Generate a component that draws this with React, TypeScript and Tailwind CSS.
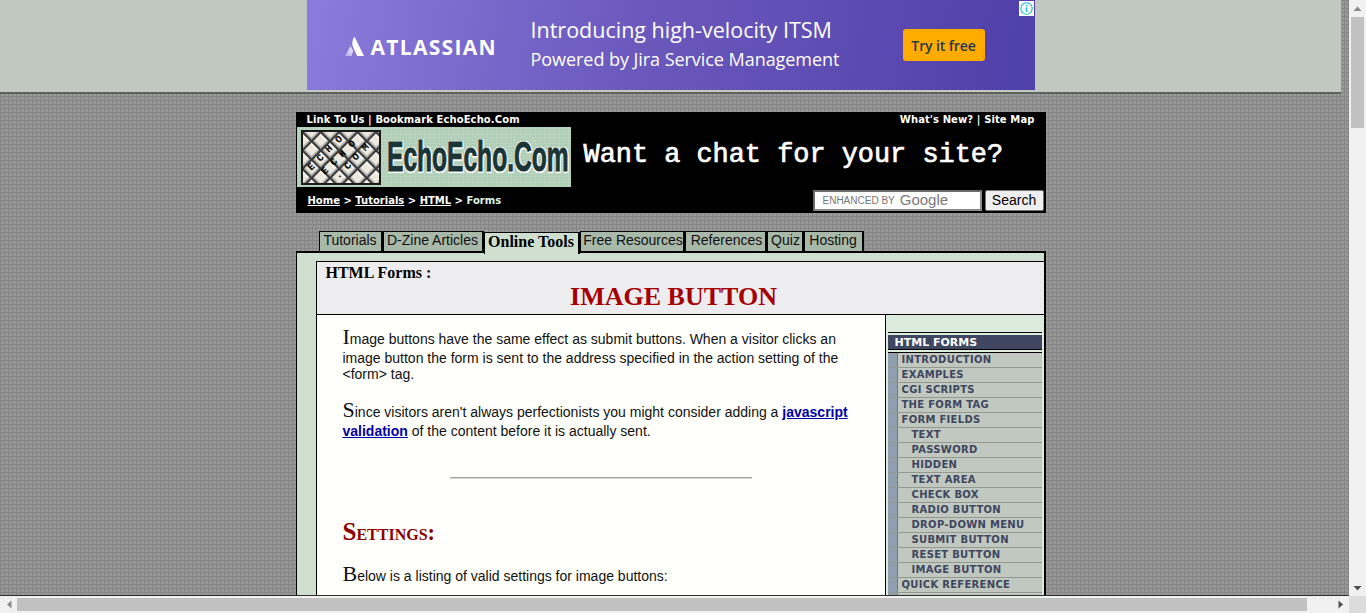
import { Fragment } from "react";

const verdana = "font-['DejaVu_Sans','Liberation_Sans',sans-serif]";

const tabs = [
  { label: "Tutorials", w: "w-[64px]" },
  { label: "D-Zine Articles", w: "w-[101px]" },
  { label: "Online Tools", w: "w-[96px]", active: true },
  { label: "Free Resources", w: "w-[105px] pl-[3px]" },
  { label: "References", w: "w-[82px] pl-[3px]" },
  { label: "Quiz", w: "w-[37px] pl-[2px]" },
  { label: "Hosting", w: "w-[60px]", last: true },
];

const navItems = [
  { label: "INTRODUCTION" },
  { label: "EXAMPLES" },
  { label: "CGI SCRIPTS" },
  { label: "THE FORM TAG" },
  { label: "FORM FIELDS" },
  { label: "TEXT", sub: true },
  { label: "PASSWORD", sub: true },
  { label: "HIDDEN", sub: true },
  { label: "TEXT AREA", sub: true },
  { label: "CHECK BOX", sub: true },
  { label: "RADIO BUTTON", sub: true },
  { label: "DROP-DOWN MENU", sub: true },
  { label: "SUBMIT BUTTON", sub: true },
  { label: "RESET BUTTON", sub: true },
  { label: "IMAGE BUTTON", sub: true },
  { label: "QUICK REFERENCE" },
  { label: "" },
];

function AdBanner() {
  return (
    <div className="w-[728px] h-[90px] mx-auto flex items-center bg-[linear-gradient(100deg,#8a7bdc_0%,#6b59bd_45%,#4f3fa8_100%)] text-white font-['Open_Sans','Liberation_Sans',sans-serif]">
      <div className="w-[224px] pl-[38px] flex items-center gap-[7px] mt-[2px]">
        <svg width="19" height="19" viewBox="0 0 19 19">
          <defs>
            <linearGradient id="atl" x1="1" y1="0" x2="0" y2="1">
              <stop offset="0" stopColor="#ffffff" stopOpacity="0.9" />
              <stop offset="1" stopColor="#ffffff" stopOpacity="0.35" />
            </linearGradient>
          </defs>
          <path d="M5.5 9 L0 19 H6.5 L8.2 14 Z" fill="url(#atl)" />
          <path d="M9 0 C6.8 4 6.8 8 8.6 11.5 L12.2 19 H19 L10 0.6 Z" fill="#ffffff" />
        </svg>
        <span className="mt-[2px] text-[21px] font-bold tracking-[1.3px] leading-none">ATLASSIAN</span>
      </div>
      <div className="w-[372px] flex flex-col gap-[3px] -mt-[3px]">
        <span className="text-[21.5px] leading-[28px] font-medium whitespace-nowrap">Introducing high-velocity ITSM</span>
        <span className="text-[18px] leading-[24px] tracking-[-0.05px] font-medium whitespace-nowrap">Powered by Jira Service Management</span>
      </div>
      <div className="w-[82px] h-[32px] rounded-[3px] bg-[#ffab00] flex items-center justify-center text-[#253858] text-[14px] font-semibold tracking-[-0.1px]">Try it free</div>
      <div className="ml-[34px] mb-[74px] w-[15px] h-[15px] bg-white flex items-center justify-center">
        <svg width="13" height="13" viewBox="0 0 13 13" fill="none">
          <circle cx="6.5" cy="6.5" r="5.7" stroke="#1fb6d8" strokeWidth="1.1" />
          <rect x="5.8" y="5.4" width="1.5" height="4.6" fill="#1fb6d8" />
          <rect x="5.8" y="2.9" width="1.5" height="1.5" fill="#1fb6d8" />
        </svg>
      </div>
    </div>
  );
}

function LogoIcon() {
  const letters = [
    ["E", 10.5, 37], ["C", 19.5, 28], ["H", 28, 19], ["O", 38, 9.5],
    ["E", 24, 41], ["C", 33, 32], ["H", 41.5, 24], ["O", 51, 14],
    [".", 37.5, 45], ["C", 47, 36], ["O", 55, 27], ["M", 64.5, 17.5],
  ] as const;
  return (
    <svg width="80" height="55" viewBox="0 0 80 55" className="shrink-0">
      <defs>
        <pattern id="lattice" width="13" height="13" patternUnits="userSpaceOnUse" patternTransform="rotate(45) translate(3.5 1.5)">
          <rect width="13" height="13" fill="#ece8de" />
          <rect x="0" y="0" width="10" height="2" fill="#fbf8f1" />
          <rect x="0" y="9.5" width="13" height="1.5" fill="#a0a0a0" />
          <rect x="9.5" y="0" width="1.5" height="13" fill="#a0a0a0" />
          <rect x="0" y="11" width="13" height="2" fill="#3a3a3a" />
          <rect x="11" y="0" width="2" height="13" fill="#3a3a3a" />
        </pattern>
      </defs>
      <rect width="80" height="55" fill="#1c1c1c" />
      <rect x="2" y="2" width="76" height="51" fill="url(#lattice)" />
      {letters.map(([ch, x, y], i) => (
        <text key={i} x={x} y={y} transform={`rotate(-45 ${x} ${y})`} textAnchor="middle" dominantBaseline="central" fontFamily="'Liberation Mono', monospace" fontWeight="700" fontSize="10" fill="#000000">
          {ch}
        </text>
      ))}
    </svg>
  );
}

function Header() {
  const link = `text-[10px] font-bold text-white ${verdana}`;
  return (
    <div className="w-[750px] h-[101px] mx-auto bg-black flex flex-col">
      <div className={`h-[15px] pl-[11px] pr-[11px] flex justify-between items-center tracking-[0.1px] ${link}`}>
        <span>Link To Us | Bookmark EchoEcho.Com</span>
        <span>What's New? | Site Map</span>
      </div>
      <div className="h-[60px] pl-px flex items-center">
        <div className="w-[274px] h-[60px] pl-[4px] flex items-center bg-[#b2cfb9] bg-[radial-gradient(#c8dfcc_1px,transparent_1px)] bg-[length:3px_3px]">
          <LogoIcon />
          <span className="block ml-[6px] w-[182px] text-[42px] leading-none font-bold text-[#1a3535] font-['Liberation_Sans',sans-serif] scale-x-[0.585] origin-left whitespace-nowrap [-webkit-text-stroke:1px_#1a3535] [text-shadow:2px_2px_0_#fff,-1px_2px_0_#fff,2px_-1px_0_#fff,-1px_-1px_0_#fff]">EchoEcho.Com</span>
        </div>
        <span className="ml-[13px] mb-[3px] text-[26.9px] leading-none text-white font-['Liberation_Mono',monospace] whitespace-nowrap [-webkit-text-stroke:0.7px_#fff]">Want a chat for your site?</span>
      </div>
      <div className="flex-1 pl-[12px] pr-[2px] flex items-center justify-between">
        <span className={link}>
          <span className="underline">Home</span> &gt; <span className="underline">Tutorials</span> &gt; <span className="underline">HTML</span> &gt; <span className="text-[#dff5e6]">Forms</span>
        </span>
        <div className="flex items-center gap-[3px] mt-px">
          <div className="w-[169px] h-[21px] bg-white border-2 border-[#6a6a6a] border-r-[#8a8a8a] border-b-[#8a8a8a] pl-[8px] flex items-center gap-[5px] font-['Liberation_Sans',sans-serif] text-[#757575]">
            <span className="text-[10px]">ENHANCED BY</span>
            <span className="text-[15px] leading-none font-medium text-[#7a7a7a] mb-[2px]">Google</span>
          </div>
          <div className="w-[59px] h-[21px] rounded-[2px] bg-[#efefef] border border-[#767676] flex items-center justify-center text-[14px] text-black font-['Liberation_Sans',sans-serif]">Search</div>
        </div>
      </div>
    </div>
  );
}

function TabBar() {
  return (
    <div className="w-[750px] h-[20px] mx-auto pl-[23px] flex items-start mt-[18px]">
      {tabs.map((t) => (
        <div
          key={t.label}
          className={`${t.w} flex items-center justify-center border-l border-t border-r-2 border-black whitespace-nowrap ${
            t.active
              ? "relative z-10 mt-px h-[22px] pb-[3px] bg-[#cfdfcf] text-[16px] font-bold font-['Liberation_Serif',serif] text-black"
              : "h-[20px] pb-[2px] bg-[#a9b9a9] text-[14px] text-[#101010] font-['Liberation_Sans',sans-serif]"
          }`}
        >
          {t.label}
        </div>
      ))}
    </div>
  );
}

function SideNav() {
  return (
    <div className="w-[159px] shrink-0 pt-[17px] pl-[2px] bg-[#dcecdc] border-l border-black">
      <div className="w-[154px]">
        <div className="h-px bg-black" />
        <div className={`mt-[2px] h-[15px] pt-[2px] border-b border-black bg-[#3e4660] pl-[7px] flex items-center text-[11px] font-bold text-white ${verdana}`}>HTML FORMS</div>
        <div className="mt-[2px] h-px bg-black" />
        {navItems.map((item, i) => (
          <div key={i} className="h-[15px] flex bg-[#c0c8bf] border-b border-[#949890]">
            <div className="w-[10px] bg-[#8f9fb0] border-r border-[#6f7a84]" />
            <span className={`${item.sub ? "pl-[14px]" : "pl-[4px]"} text-[10px] leading-[13px] font-bold tracking-[0.3px] whitespace-nowrap text-[#3e4660] ${verdana}`}>{item.label}</span>
          </div>
        ))}
      </div>
    </div>
  );
}

function Article() {
  const para = "first-letter:text-[22px] first-letter:font-['Liberation_Serif',serif]";
  return (
    <div className="flex-1 min-w-0 bg-[#fffffb] pl-[26px] pr-[24px] pt-[9px] text-[14px] leading-[normal] text-[#111] font-['Liberation_Sans',sans-serif]">
      <p className={para}>
        Image buttons have the same effect as submit buttons. When a visitor clicks an image button the form is sent to the address specified in the action setting of the &lt;form&gt; tag.
      </p>
      <p className={`mt-[15px] ${para}`}>
        Since visitors aren't always perfectionists you might consider adding a{" "}
        <span className="font-bold underline text-[#0000a8]">javascript validation</span> of the content before it is actually sent.
      </p>
      <div className="mt-[38px] ml-[107px] w-[302px] h-[2px] bg-[#a0a0a0] border-b border-[#d8d8d8]" />
      <h2 className="mt-[39px] text-[22.5px] font-bold text-[#8b0000] font-['Liberation_Serif',serif] [font-variant:small-caps] first-letter:text-[25px]">Settings:</h2>
      <p className={`mt-[15px] ${para}`}>Below is a listing of valid settings for image buttons:</p>
    </div>
  );
}

function Content() {
  return (
    <div className="flex-1 min-h-0 w-[750px] mx-auto border-l border-r-2 border-t-2 border-black bg-[#cfdfcf] pl-[19px] pt-[8px] flex overflow-hidden">
      <div className="flex-1 min-w-0 flex flex-col border-l border-t border-black">
        <div className="h-[53px] shrink-0 bg-[#ededf0] border-b border-black pl-[9px] pt-[2px] text-black font-['Liberation_Serif',serif]">
          <div className="text-[16px] font-bold leading-[18px]">HTML Forms :</div>
          <div className="pr-[22px] text-center text-[26px] font-bold leading-[30px] text-[#a60000]">IMAGE BUTTON</div>
        </div>
        <div className="flex-1 min-h-0 flex">
          <Article />
          <SideNav />
        </div>
      </div>
    </div>
  );
}

function VScrollbar() {
  return (
    <div className="w-[17px] shrink-0 bg-[#f1f1f1] flex flex-col items-center">
      <div className="h-[17px] flex items-center justify-center">
        <svg width="9" height="6" viewBox="0 0 9 6"><path d="M4.5 0.5 L8.5 5 H0.5 Z" fill="#8a8a8a" /></svg>
      </div>
      <div className="w-[13px] h-[111px] bg-[#c1c1c1]" />
      <div className="flex-1" />
      <div className="h-[17px] flex items-center justify-center">
        <svg width="9" height="6" viewBox="0 0 9 6"><path d="M0.5 1 H8.5 L4.5 5.5 Z" fill="#505050" /></svg>
      </div>
    </div>
  );
}

function HScrollbar() {
  return (
    <div className="h-[17px] shrink-0 flex bg-[#f1f1f1]">
      <div className="w-[17px] flex items-center justify-center">
        <svg width="6" height="9" viewBox="0 0 6 9"><path d="M5.5 0.5 V8.5 L1 4.5 Z" fill="#8a8a8a" /></svg>
      </div>
      <div className="mt-[2px] w-[1290px] h-[13px] bg-[#c1c1c1]" />
      <div className="flex-1 flex items-center justify-end pr-[5px]">
        <svg width="6" height="9" viewBox="0 0 6 9"><path d="M0.5 0.5 L5 4.5 L0.5 8.5 Z" fill="#505050" /></svg>
      </div>
      <div className="w-[17px] bg-[#dcdcdc]" />
    </div>
  );
}

export default function App() {
  return (
    <Fragment>
      <div className="w-[1366px] h-[613px] overflow-hidden flex flex-col">
        <div className="flex-1 min-h-0 flex">
          <div className="flex-1 min-w-0 border-b border-[#2e2e2e] bg-[#989898] bg-[linear-gradient(#868686_1px,transparent_1px),linear-gradient(90deg,#868686_1px,transparent_1px)] bg-[length:4px_4px]">
            <div className="w-[1341px] h-full flex flex-col">
              <div className="h-[94px] shrink-0 bg-[#c0c8bf] border-b-2 border-[#5f635f]">
                <AdBanner />
              </div>
              <div className="mt-[18px]">
                <Header />
              </div>
              <TabBar />
              <Content />
            </div>
          </div>
          <VScrollbar />
        </div>
        <HScrollbar />
      </div>
    </Fragment>
  );
}
